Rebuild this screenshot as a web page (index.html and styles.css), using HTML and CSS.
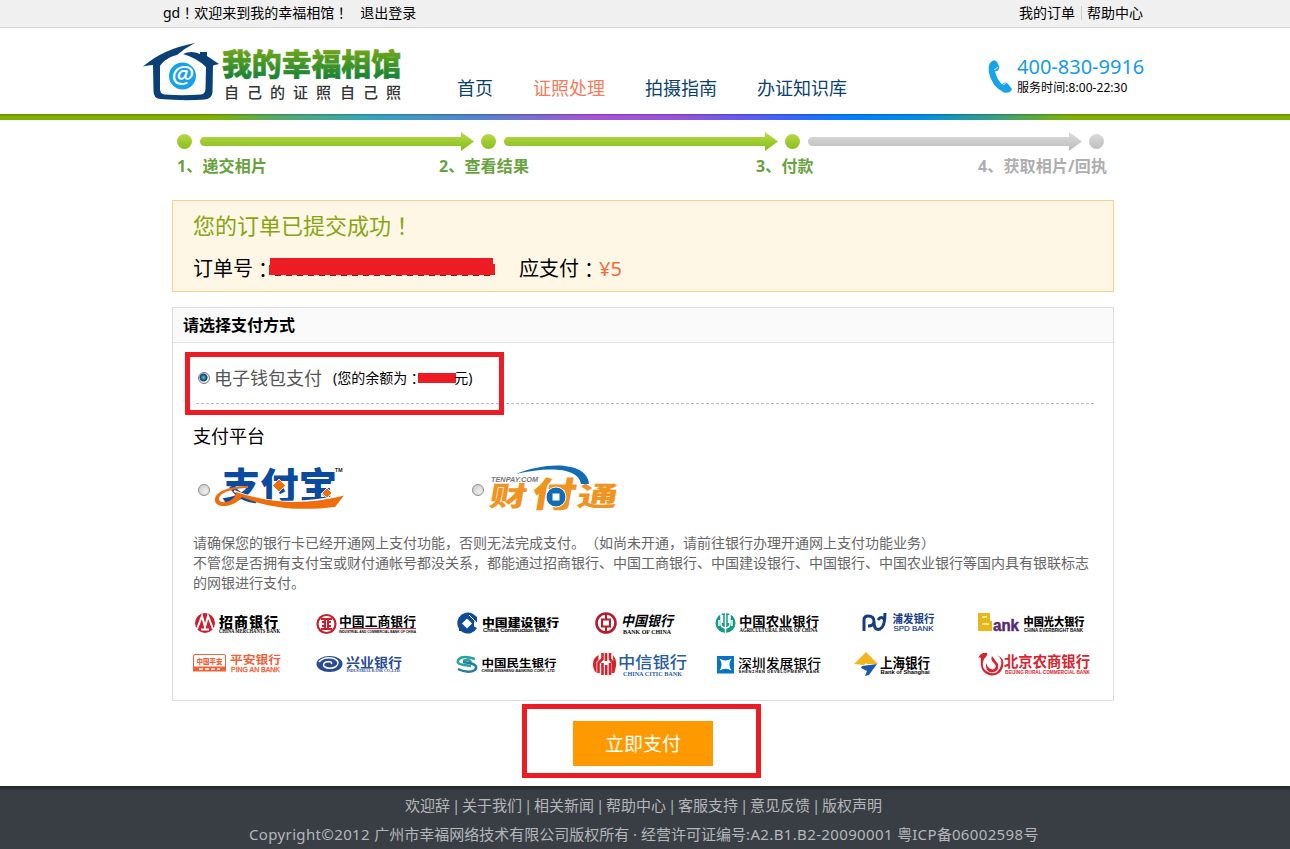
FILE: index.html
```html
<!DOCTYPE html>
<html lang="zh-CN">
<head>
<meta charset="utf-8">
<title>我的幸福相馆</title>
<link rel="stylesheet" href="styles.css">
</head>
<body>
<div class="topbar">
  <div class="topbar-left"><span>gd<i class="mid" lang="zh-TW">！</i>欢迎来到我的幸福相馆<i class="mid" lang="zh-TW">！</i></span><span>退出登录</span></div>
  <div class="topbar-right"><span>我的订单</span><span class="divider"></span><span>帮助中心</span></div>
</div>
<header class="header">
  <svg class="logo" viewBox="143 41 260 62" width="260" height="62">
    <defs>
      <linearGradient id="brand" x1="0" y1="0" x2="0" y2="1"><stop offset=".2" stop-color="#72a718"/><stop offset="1" stop-color="#047c3c"/></linearGradient>
    </defs>
    <path fill="#0b4076" d="M143 66.500Q163 49 195 43Q185 48 177 55C169 57 163 61 160 66L160 89Q160 94 165 94.500Q182 96 201 94.500Q205 94 205.500 89L206 67Q197 58 183 54Q191 50 200 54V52H207V56L219 64L213 65.500L212.500 92Q212 99 205 99.500Q184 101 160 99Q153.500 98 153.500 91L153 65Q148 65 143 66.500Z"/>
    <circle cx="182.500" cy="76" r="13.500" fill="#17a0ec"/>
    <text class="latin" x="171.500" y="82.500" font-size="23" font-weight="500" font-style="italic" fill="#fff" textLength="22" lengthAdjust="spacingAndGlyphs">@</text>
    <text x="222" y="75" font-size="30" font-weight="900" fill="url(#brand)" stroke="url(#brand)" stroke-width=".6" textLength="179" lengthAdjust="spacingAndGlyphs">我的幸福相馆</text>
    <g font-size="15" font-weight="500" fill="#333"><text x="224 247 270 293 316 340 363 386" y="97.500">自己的证照自己照</text></g>
  </svg>
  <nav class="nav"><span>首页</span><span class="active">证照处理</span><span>拍摄指南</span><span>办证知识库</span></nav>
  <div class="contact">
    <svg viewBox="988 59 25 36" width="25" height="36"><path fill="#17a3ec" d="M990 63Q994 58 997 62L999.500 67Q999 71 995 71.500Q997 79 1002 84.500Q1005 81 1008 84L1012 89Q1010 94 1004 92.500Q992 87 989 73Q988 66 990 63Z"/><path stroke="#fff" stroke-width=".8" d="M994 70l4.500-3M1003 85l4-3"/></svg>
    <div><div class="phone">400-830-9916</div><div class="hours">服务时间:8:00-22:30</div></div>
  </div>
</header>
<div class="rainbow"></div>

<main class="main">
  <section class="steps">
    <svg viewBox="172 130 942 22" width="942" height="22">
      <defs>
        <linearGradient id="on" gradientUnits="userSpaceOnUse" x1="0" y1="133" x2="0" y2="150"><stop stop-color="#b4dd45"/><stop offset="1" stop-color="#8abc1c"/></linearGradient>
        <linearGradient id="off" gradientUnits="userSpaceOnUse" x1="0" y1="133" x2="0" y2="150"><stop stop-color="#dcdcdc"/><stop offset="1" stop-color="#bdbdbd"/></linearGradient>
        <path id="arrow" d="M204.500 137H461V132L474 141.500L461 151V146H204.500A4.500 4.500 0 0 1 204.500 137Z"/>
      </defs>
      <g fill="url(#on)"><circle cx="184.500" cy="141.500" r="7.500"/><circle cx="488.500" cy="141.500" r="7.500"/><circle cx="792.500" cy="141.500" r="7.500"/><use href="#arrow"/><use href="#arrow" x="304"/></g>
      <g fill="url(#off)"><use href="#arrow" x="608"/><circle cx="1096.500" cy="141.500" r="7.500"/></g>
    </svg>
    <div class="labels"><span>1、递交相片</span><span>2、查看结果</span><span>3、付款</span><span class="todo">4、获取相片/回执</span></div>
  </section>

  <section class="notice">
    <h1>您的订单已提交成功<i class="mid" lang="zh-TW">！</i></h1>
    <div class="order"><span>订单号<i class="mid" lang="zh-TW">：</i></span>
      <svg class="mask" viewBox="269 257 227 20" width="227" height="20"><path fill="#ed1c24" d="M270 258H493V264H495V275H269V265H270Z"/><path stroke="#7a1c10" stroke-dasharray="6 5" d="M275 275.500H490"/></svg>
      <span class="due">应支付<i class="mid" lang="zh-TW">：</i><b>¥5</b></span></div>
  </section>

  <section class="panel">
    <h2>请选择支付方式</h2>
    <div class="wallet">
      <span class="radio checked"></span><span class="wallet-name">电子钱包支付</span>
      <span class="balance">(您的余额为<i class="mid" lang="zh-TW">：</i><span class="balance-mask"></span>元)</span>
      <div class="mark mark-wallet"></div>
    </div>
    <h3>支付平台</h3>
    <div class="platforms">
      <span class="radio"></span>
      <svg viewBox="214 464 132 48" width="132" height="48">
        <g fill="#0a4ba0" font-weight="800"><text x="222" y="500" font-size="37" textLength="115" lengthAdjust="spacingAndGlyphs">支付宝</text></g>
        <path fill="none" stroke="#fff" stroke-width="2" d="M234 491C262 503 300 506 343 495"/>
        <path fill="#f06d0b" d="M248 486C231 486 215 491 215 500C215 509 234 508 242 497C270 509 300 511 335 507L344 495.500C305 506 270 503 236 492C236 501 220 506 219 499C219 492 235 488 248 488Z"/>
        <path fill="#f06d0b" stroke="#fff" stroke-width=".8" d="M279 479l6.500 6.500-6.500 6.500-6.500-6.500ZM327 488l5 5-5 5-5-5Z"/>
        <text class="latin" x="335" y="472" font-size="5" font-weight="700" fill="#222">TM</text>
      </svg>
      <span class="radio second"></span>
      <svg viewBox="488 464 132 48" width="132" height="48">
        <g fill="#f0941f" font-weight="900" transform="translate(89.500 0) skewX(-10)">
          <text x="488" y="506.500" font-size="27" textLength="37" lengthAdjust="spacingAndGlyphs">财</text>
          <text x="530" y="507" font-size="35" textLength="44" lengthAdjust="spacingAndGlyphs">付</text>
          <text x="576" y="506.500" font-size="27" textLength="40" lengthAdjust="spacingAndGlyphs">通</text>
        </g>
        <path fill="#116cb3" d="M516 474C550 460 588 463 589 484H581C579 468 550 466 516 474Z"/>
        <circle cx="556" cy="497" r="10" fill="#116cb3" stroke="#fff"/><path fill="#fff" d="M552.500 493.500h7v7h-7z"/>
        <text class="arial" x="491" y="481.500" font-size="7.500" font-weight="700" font-style="italic" fill="#77787b" textLength="47" lengthAdjust="spacingAndGlyphs">TENPAY.COM</text>
      </svg>
    </div>
    <p class="hint">请确保您的银行卡已经开通网上支付功能，否则无法完成支付。（如尚未开通，请前往银行办理开通网上支付功能业务）<br>不管您是否拥有支付宝或财付通帐号都没关系，都能通过招商银行、中国工商银行、中国建设银行、中国银行、中国农业银行等国内具有银联标志<br>的网银进行支付。</p>
    <div class="banks">
      <svg viewBox="193 606 122 34" width="122" height="34"><circle cx="205" cy="623" r="10" fill="#c8202f"/><path fill="none" stroke="#fff" stroke-width="2" d="M197 629L202 616L205 627L208 616L213 629M201 629.500h8"/><text x="219 234 249 264" y="626.500" font-size="14" font-weight="900">招商银行</text><text class="serif" x="219" y="633" font-size="5.500" font-weight="700" textLength="61" lengthAdjust="spacingAndGlyphs">CHINA MERCHANTS BANK</text></svg>
      <svg viewBox="315 606 140 34" width="140" height="34"><circle cx="326.500" cy="624" r="9" fill="none" stroke="#c8202f" stroke-width="2.200"/><path fill="none" stroke="#c8202f" stroke-width="2" d="M321 619h11M321 629h11M322 622h3v4h-3M331 622h-3v4h3M325 618v4M328 618v4M325 626v4M328 626v4"/><text x="339" y="626" font-size="13" font-weight="700" textLength="77" lengthAdjust="spacingAndGlyphs">中国工商银行</text><path stroke="#c8202f" d="M340 628.500h76"/><text class="arial" x="339" y="633" font-size="4" font-weight="900" textLength="77" lengthAdjust="spacingAndGlyphs">INDUSTRIAL AND COMMERCIAL BANK OF CHINA</text></svg>
      <svg viewBox="455 606 138 34" width="138" height="34"><path fill="#114b96" d="M473 614A10.500 10.500 0 1 0 477 628L473 626 467 631 460 624 467 617 477 623V617Z"/><path fill="#114b96" d="M459 617h15v14h-15Z"/><path fill="#fff" d="M467 618.500l5 5-5 5-5-5Z"/><path stroke="#fff" d="M469 615l8 8"/><text x="482" y="626.500" font-size="11" font-weight="900" textLength="77" lengthAdjust="spacingAndGlyphs">中国建设银行</text><text class="arial" x="483" y="632" font-size="6" textLength="66" lengthAdjust="spacingAndGlyphs" stroke="#000" stroke-width=".2">China Construction Bank</text></svg>
      <svg viewBox="593 606 121 34" width="121" height="34"><circle cx="606" cy="623" r="9.500" fill="none" stroke="#b51d2c" stroke-width="2.600"/><path fill="none" stroke="#b51d2c" stroke-width="2" d="M606 614v5M606 627v5M602 619.500h8v7h-8Z"/><text x="621" y="625.500" font-size="14" font-weight="700" font-style="italic" textLength="52" lengthAdjust="spacingAndGlyphs">中国银行</text><text class="serif" x="623" y="633.500" font-size="6.500" font-weight="700" textLength="48" lengthAdjust="spacingAndGlyphs">BANK OF CHINA</text></svg>
      <svg viewBox="714 606 139 34" width="139" height="34"><circle cx="725.500" cy="623" r="10" fill="#149987"/><path fill="none" stroke="#fff" stroke-width="1.500" d="M725.500 613v20M721 614v10q0 3 4 4M730 614v10q0 3-4 4M722.500 615v8M728.500 615v8M719 620v6M732 620v6"/><text x="739" y="625.500" font-size="13" font-weight="700" textLength="80" lengthAdjust="spacingAndGlyphs">中国农业银行</text><text class="serif" x="739.500" y="632" font-size="5.500" font-weight="700" textLength="78" lengthAdjust="spacingAndGlyphs">AGRICULTURAL BANK OF CHINA</text></svg>
      <svg viewBox="853 606 123 34" width="123" height="34"><path fill="none" stroke="#173c82" stroke-width="3" d="M864 631V620Q864 616 868 616Q874 616 874 621.500Q874 626 868 626M874 622Q874 631 880 629Q885 627 885 613M885 620Q881 615 878 620"/><text x="892.500" y="622.500" font-size="11.500" font-weight="700" fill="#173c82" textLength="42" lengthAdjust="spacingAndGlyphs">浦发银行</text><text class="arial" x="893.500" y="631" font-size="8" fill="#173c82" stroke="#173c82" stroke-width=".2" textLength="40" lengthAdjust="spacingAndGlyphs">SPD BANK</text></svg>
      <svg viewBox="976 606 130 34" width="130" height="34"><path fill="#e5b71c" d="M978 613h12v8h2v10h-14Z"/><path stroke="#fff6b0" stroke-width="1.500" d="M982 617h5M982 624h7"/><text class="arial" x="993" y="631" font-size="16" font-weight="700" fill="#5a2873" stroke="#5a2873" stroke-width=".5" textLength="26" lengthAdjust="spacingAndGlyphs">ank</text><text x="1023.500" y="625.500" font-size="11" font-weight="900" textLength="61" lengthAdjust="spacingAndGlyphs">中国光大银行</text><text class="arial" x="1024" y="631.500" font-size="4.600" font-weight="700" textLength="59" lengthAdjust="spacingAndGlyphs">CHINA EVERBRIGHT BANK</text></svg>

      <svg viewBox="193 647 122 34" width="122" height="34"><rect x="193.500" y="654.500" width="32" height="16" rx="1.500" fill="#fff" stroke="#ee6237"/><path fill="#ee6237" d="M193 666.500h33v5h-33Z"/><text x="196.500" y="663.500" font-size="6.500" font-weight="900" fill="#ee6237" textLength="26" lengthAdjust="spacingAndGlyphs">中国平安</text><path stroke="#fff" stroke-width="1.500" stroke-dasharray="4 2" d="M199 669h21"/><text x="230" y="664" font-size="11.500" font-weight="700" fill="#ee6237" textLength="51" lengthAdjust="spacingAndGlyphs">平安银行</text><text class="arial" x="231" y="671.500" font-size="6.500" fill="#ee6237" stroke="#ee6237" stroke-width=".3" textLength="49" lengthAdjust="spacingAndGlyphs">PING AN BANK</text></svg>
      <svg viewBox="315 647 140 34" width="140" height="34"><ellipse cx="329.500" cy="664" rx="13" ry="8" fill="#294c94"/><path fill="none" stroke="#fff" stroke-width="1.500" d="M319 662Q324 656 334 658.500Q341 662 336 666.500Q330 670 324 666.500Q322 662 329 661.500Q333 662 331 664"/><text x="346" y="667" font-size="13" font-weight="600" fill="#294c94" textLength="56" lengthAdjust="spacingAndGlyphs">兴业银行</text><text class="serif" x="346.500" y="672" font-size="4.500" font-weight="700" fill="#294c94" textLength="54" lengthAdjust="spacingAndGlyphs">INDUSTRIAL BANK CO.,LTD.</text></svg>
      <svg viewBox="455 647 138 34" width="138" height="34"><path fill="none" stroke="#29a39a" stroke-width="2.500" d="M475 659Q463 655 459 659Q455 664 464 665L471 666M463 661Q470 658 471 663"/><path fill="none" stroke="#1f7da5" stroke-width="2.500" d="M458 669Q468 674 475 670Q479 665 469 663L463 662"/><text x="481.500" y="667" font-size="10.500" font-weight="600" textLength="75" lengthAdjust="spacingAndGlyphs">中国民生银行</text><text class="arial" x="481.500" y="672" font-size="4.200" font-weight="700" font-style="italic" textLength="74" lengthAdjust="spacingAndGlyphs">CHINA MINSHENG BANKING CORP., LTD.</text></svg>
      <svg viewBox="593 647 121 34" width="121" height="34"><path fill="none" stroke="#d6222b" stroke-width="2.600" d="M602.500 653v6l-4 4v10M606 653v8M610 653v6l3 4v10M602.500 663v12M606.200 665v10M610 663v12"/><path fill="#d6222b" d="M598.500 655v5l-2 2v11Q593 670 593 664T598.500 655M613 655Q617 660 616 666T613.500 673Z"/><text x="618" y="668" font-size="16" font-weight="500" fill="#285ca3" textLength="69" lengthAdjust="spacingAndGlyphs">中信银行</text><text class="serif" x="623" y="675.500" font-size="6.500" font-weight="700" fill="#285ca3" textLength="59" lengthAdjust="spacingAndGlyphs">CHINA CITIC BANK</text></svg>
      <svg viewBox="714 647 139 34" width="139" height="34"><path fill="#0874c4" d="M717 656h17v17.500h-17Z"/><path fill="#fff" d="M719.500 658.500Q725.500 662.500 731.500 658.500Q727.500 664.500 731.500 670.500Q725.500 667 719.500 670.500Q723.500 664.500 719.500 658.500Z"/><text x="738" y="667.500" font-size="13" font-weight="500" textLength="83" lengthAdjust="spacingAndGlyphs">深圳发展银行</text><text class="arial" x="738.500" y="673" font-size="4" font-weight="700" textLength="81" lengthAdjust="spacing">SHENZHEN DEVELOPMENT BANK</text></svg>
      <svg viewBox="853 647 123 34" width="123" height="34"><path fill="#f2b51d" d="M854 664L866 652L878 664H867L866 663L864 665Z"/><path fill="#1c5aa8" d="M862 666L877 664L869 675L865 676L867 671L861 668Z"/><text x="880" y="667.500" font-size="13.500" font-weight="600" textLength="50" lengthAdjust="spacingAndGlyphs">上海银行</text><text class="arial" x="880.500" y="673.500" font-size="6" font-weight="700" textLength="49" lengthAdjust="spacingAndGlyphs">Bank of Shanghai</text></svg>
      <svg viewBox="976 647 130 34" width="130" height="34"><path fill="#d9232e" d="M978 658Q981 652 987 653Q988 655 984 659Q980 668 988 672Q996 676 1000 668Q1004 659 997 655Q1005 658 1003 667Q1000 676 991 675.500Q979 673 981 659Q981 656 978 658Z"/><path fill="#d9232e" d="M992 656Q990 660 994 663Q998 667 993 669.500Q988 669 986 663Q985 672 992 672.500Q1000 671 998 664Q995 660 992 656Z"/><text x="1004" y="666.500" font-size="14.500" font-weight="700" fill="#d9232e" textLength="86" lengthAdjust="spacingAndGlyphs">北京农商银行</text><text class="arial" x="1005" y="674" font-size="5.500" font-weight="700" fill="#d9232e" textLength="85" lengthAdjust="spacingAndGlyphs">BEIJING RURAL COMMERCIAL BANK</text></svg>
    </div>
  </section>
  <div class="submit"><button class="pay">立即支付</button></div>
</main>
<footer class="footer">
  <div class="links"><span>欢迎辞</span><em>|</em><span>关于我们</span><em>|</em><span>相关新闻</span><em>|</em><span>帮助中心</span><em>|</em><span>客服支持</span><em>|</em><span>意见反馈</span><em>|</em><span>版权声明</span></div>
  <div class="copy"><span class="wide">Copyright©2012 </span>广州市幸福网络技术有限公司版权所有 · 经营许可证编号<span class="wide">:A2.B1.B2-20090001 </span>粤<span class="wide">ICP</span>备<span class="wide">06002598</span>号</div>
</footer>
</body>
</html>
```
FILE: styles.css
```css
* { box-sizing: border-box; }
body { margin: 0; width: 1290px; height: 849px; overflow: hidden; background: #fff; color: #000; font: 14px/20px "Noto Sans", "Noto Sans CJK SC", sans-serif; white-space: nowrap; text-spacing-trim: space-all; }
svg { display: block; flex: none; overflow: visible; }
svg text { font-family: "Noto Sans CJK SC", sans-serif; }
svg .latin { font-family: "Noto Sans", sans-serif; }
svg .arial { font-family: "Liberation Sans", sans-serif; }
svg .serif { font-family: "Liberation Serif", serif; }
h1, h2, h3, p { margin: 0; font-weight: 400; }
.mid { font-style: normal; font-family: "Noto Sans CJK TC", sans-serif; line-height: 1; }
.topbar { display: flex; justify-content: space-between; height: 28px; padding: 3px 147px 0 163px; background: #f0f0f0; border-bottom: 1px solid #d8d8d8; }
.topbar-left { display: flex; gap: 12px; }
.topbar-left span { height: 20px; }
.topbar-right { display: flex; align-items: center; height: 20px; }
.divider { width: 1px; height: 14px; margin: 0 5px 0 6px; background: #ccc; }
.header { display: flex; height: 86px; padding-left: 143px; }
.logo { margin-top: 13px; }
.nav { display: flex; gap: 40px; margin: 48px 0 0 54px; font-size: 18px; line-height: 24px; color: #0b3f6e; }
.nav .active { color: #f37c5c; }
.contact { display: flex; gap: 4px; margin: 26px 0 0 141px; }
.contact svg { margin-top: 5px; }
.phone { font-size: 20px; line-height: 26px; color: #169be6; }
.hours { padding-top: 1px; font-size: 12px; line-height: 14px; letter-spacing: .06px; }
.rainbow { height: 6px; background: linear-gradient(rgba(0,0,0,.25), transparent 35%), linear-gradient(90deg, #7fb200 0, #7fb200 215px, #55aa65 275px, #35a6bd 370px, #5383d0 480px, #a855d8 590px, #9852dc 680px, #3b64ff 790px, #007fff 850px, #008ee8 920px, #3ba27a 1000px, #7fb200 1070px); }
.main { width: 942px; margin-left: 172px; }
.steps { height: 80px; padding-top: 10px; }
.labels { display: grid; grid-template-columns: 262px 317px 222px auto; padding: 3px 0 0 5px; font-size: 16px; line-height: 22px; font-weight: 700; letter-spacing: .15px; color: #67a23c; }
.labels .todo { color: #aeaeae; }
.notice { height: 92px; padding: 10px 20px 0; border: 1px solid #edd58f; background: #fef7e6; box-shadow: inset 0 0 5px #fff3d6; }
.notice h1 { height: 28px; font-size: 22px; line-height: 28px; color: #87a511; }
.order { display: flex; margin-top: 16px; font-size: 20px; line-height: 28px; }
.order .mid { vertical-align: -2px; }
.order .mask { margin: 2px 23px 0 -4px; }
.order b { font-weight: 400; color: #f26b3e; }
.panel { height: 394px; margin-top: 15px; border: 1px solid #ddd; }
.panel h2 { height: 35px; padding-left: 10px; border-bottom: 1px solid #e2e2e2; background: #fafafa; font-size: 16px; line-height: 34px; font-weight: 700; }
.wallet { position: relative; display: flex; align-items: center; height: 61px; margin: 0 19px 0 23px; padding: 0 0 0 2px; border-bottom: 1px dashed #bbb; }
.wallet > span { margin-top: 10px; }
.radio { flex: none; width: 12px; height: 12px; border: 1px solid #8d8d8d; border-radius: 50%; background: radial-gradient(circle at 65% 65%, #eee, #c8c8c8); }
.radio.checked { border-color: #778; background: radial-gradient(circle at 45% 45%, #5bc6e0 0, #164d70 3px, #164d70 3.5px, #eef2f5 4.5px); }
.wallet-name { margin-left: 4px; font-size: 18px; color: #555; }
.balance { margin-left: 11px; }
.balance .mid { vertical-align: -1px; }
.balance-mask { display: inline-block; width: 38px; height: 10px; margin: 0 -2px 0 -3px; background: #ed1c24; vertical-align: 0; }
.mark { position: absolute; border: 5px solid #ed1c24; pointer-events: none; }
.mark-wallet { left: -11px; top: 9px; width: 319px; height: 63px; }
.panel h3 { padding: 20px 0 0 20px; font-size: 18px; line-height: 24px; }
.platforms { display: flex; align-items: center; margin: 16px 0 0 25px; height: 48px; gap: 4px; }
.platforms .radio { margin-top: 4px; }
.platforms .second { margin-left: 122px; }
.hint { margin: 20px 0 0 20px; color: #666; font-family: "Noto Sans CJK SC", sans-serif; }
.banks { display: grid; grid-template-columns: 122px 140px 138px 121px 139px 123px 130px; row-gap: 7px; margin: 14px 0 0 20px; }
.submit { width: 239px; height: 74px; margin: 3px 0 0 350px; padding: 12px 46px; border: 5px solid #ed1c24; }
.pay { display: block; width: 140px; height: 45px; padding: 0 0 2px; border: 0; background: #ff9900; color: #fff; font: 19px/43px "Noto Sans CJK SC", sans-serif; }
.footer { height: 63px; margin-top: 8px; padding-top: 8px; background: linear-gradient(#23272a, #383d43 5px, #3a3f45); color: #b4b7ba; font-size: 15px; line-height: 22px; }
.links { display: flex; margin-left: 405px; }
.links em { width: 12px; text-align: center; font-style: normal; }
.copy { margin: 7px 0 0 249px; }
.wide { letter-spacing: .36px; }
```
